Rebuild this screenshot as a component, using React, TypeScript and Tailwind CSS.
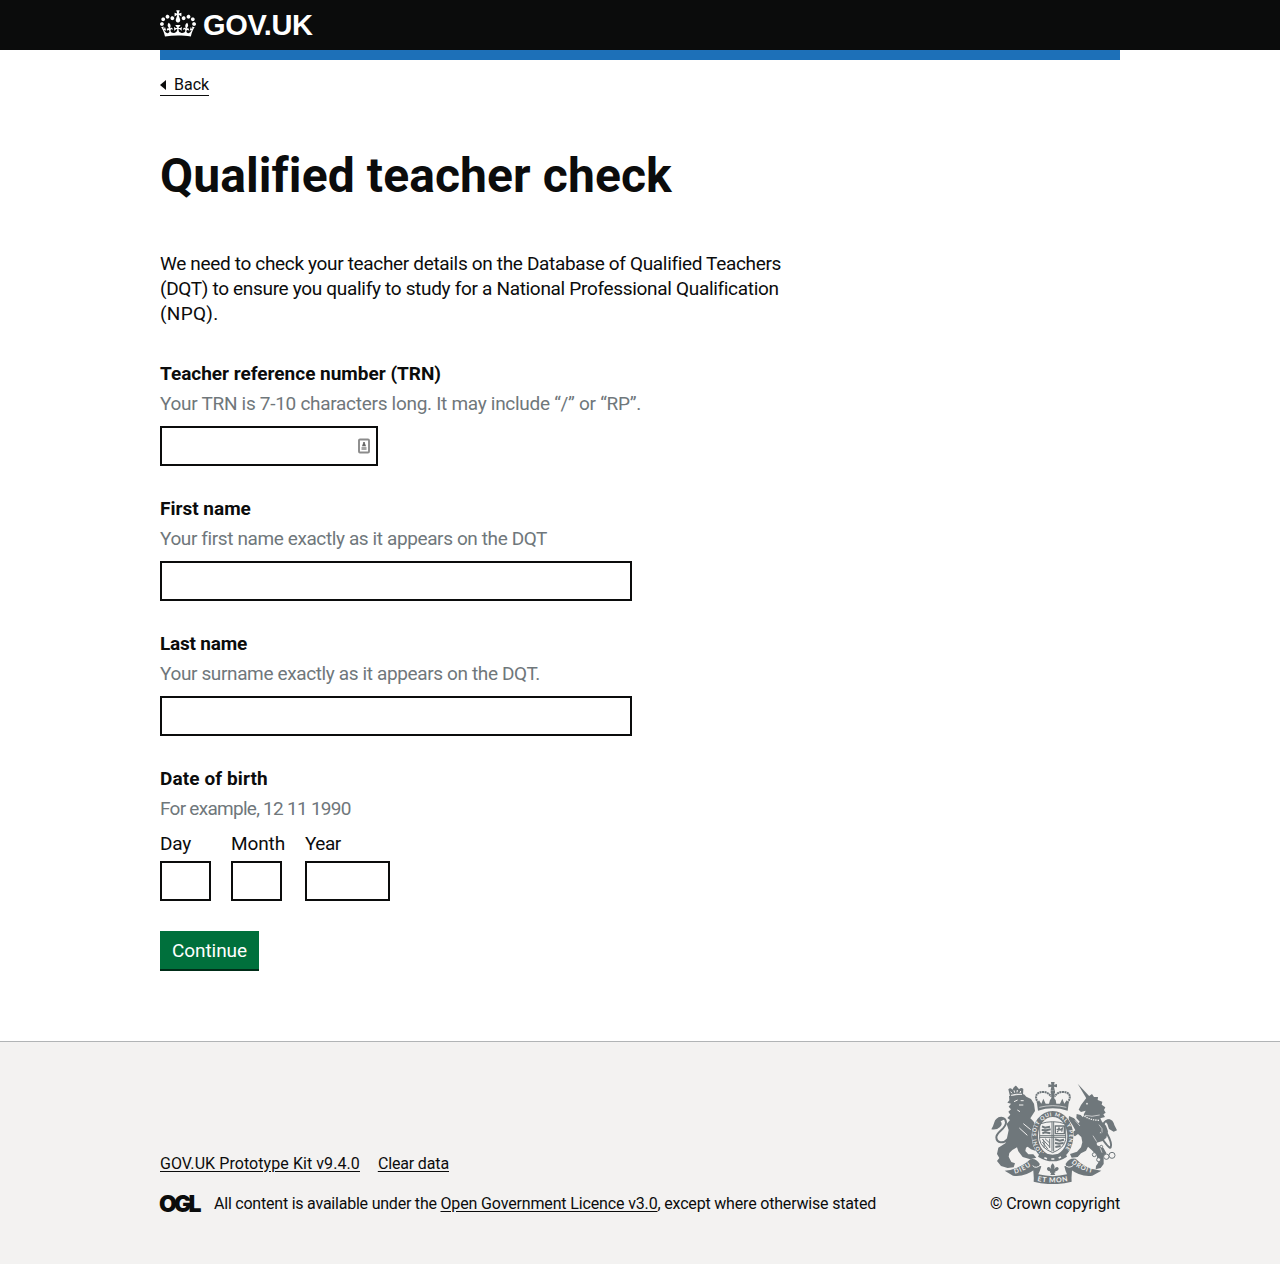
import type { ReactNode } from 'react';

function CrownIcon() {
  return (
    <svg className="h-[27px] w-9 shrink-0" viewBox="0 0 132 97" aria-hidden="true">
      <path
        fill="currentColor"
        fillRule="evenodd"
        d="M25 30.2c3.5 1.5 7.7-.2 9.1-3.7 1.5-3.6-.2-7.8-3.9-9.2-3.6-1.4-7.6.3-9.1 3.9-1.4 3.5.3 7.5 3.9 9zM9 39.5c3.6 1.5 7.8-.2 9.2-3.7 1.5-3.6-.2-7.8-3.9-9.1-3.6-1.5-7.6.2-9.1 3.8-1.4 3.5.3 7.5 3.8 9zM4.4 57.2c3.5 1.5 7.7-.2 9.1-3.8 1.5-3.6-.2-7.7-3.9-9.1-3.5-1.5-7.6.3-9.1 3.8-1.4 3.5.3 7.6 3.9 9.1zm38.3-21.4c3.5 1.5 7.7-.2 9.1-3.8 1.5-3.6-.2-7.7-3.9-9.1-3.6-1.5-7.6.3-9.1 3.8-1.3 3.6.4 7.7 3.9 9.1zm64.4-5.6c-3.6 1.5-7.8-.2-9.1-3.7-1.5-3.6.2-7.8 3.8-9.2 3.6-1.4 7.7.3 9.2 3.9 1.3 3.5-.4 7.5-3.9 9zm15.9 9.3c-3.6 1.5-7.7-.2-9.1-3.7-1.5-3.6.2-7.8 3.7-9.1 3.6-1.5 7.7.2 9.2 3.8 1.5 3.5-.3 7.5-3.8 9zm4.7 17.7c-3.6 1.5-7.8-.2-9.2-3.8-1.5-3.6.2-7.7 3.9-9.1 3.6-1.5 7.7.3 9.2 3.8 1.3 3.5-.4 7.6-3.9 9.1zM89.3 35.8c-3.6 1.5-7.8-.2-9.2-3.8-1.4-3.6.2-7.7 3.9-9.1 3.6-1.5 7.7.3 9.2 3.8 1.4 3.6-.3 7.7-3.9 9.1zM69.7 17.7l8.9 4.7V9.3l-8.9 2.8c-.2-.3-.5-.6-.9-.9L72.4 0H59.6l3.5 11.2c-.3.3-.6.5-.9.9l-8.8-2.8v13.1l8.8-4.7c.3.3.6.7.9.9l-5 15.4v.1c-.2.8-.4 1.6-.4 2.4 0 4.1 3.1 7.5 7 8.1h.2c.3 0 .7.1 1 .1.4 0 .7 0 1-.1h.2c4-.6 7.1-4.1 7.1-8.1 0-.8-.1-1.7-.4-2.4V34l-5.1-15.4c.4-.2.7-.6 1-.9zM66 92.8c16.9 0 32.8 1.1 47.1 3.2 4-16.9 8.9-26.7 14-33.5l-9.6-3.4c1 4.9 1.1 7.2 0 10.2-1.5-1.4-3-4.3-4.2-8.7L108.6 76c2.8-2 5-3.2 7.5-3.3-4.4 9.4-10 11.9-13.6 11.2-4.3-.8-6.3-4.6-5.6-7.9 1-4.7 5.7-5.9 8-.5 4.3-8.7-3-11.4-7.6-8.8 7.1-7.2 7.9-13.5 2.1-21.1-8 6.1-8.1 12.3-4.5 20.8-4.7-5.4-12.1-2.5-9.5 6.2 3.4-5.2 7.9-2 7.2 3.1-.6 4.3-6.4 7.8-13.5 7.2-10.3-.9-10.9-8-11.2-13.8 2.5-.5 7.1 1.8 11 7.3L80.2 60c-4.1 4.4-8 5.3-12.3 5.4 1.4-4.4 8-11.6 8-11.6H55.5s6.4 7.2 7.9 11.6c-4.2-.1-8-1-12.3-5.4l1.4 16.4c3.9-5.5 8.5-7.7 10.9-7.3-.3 5.8-.9 12.8-11.1 13.8-7.2.6-12.9-2.9-13.5-7.2-.7-5 3.8-8.3 7.1-3.1 2.7-8.7-4.6-11.6-9.4-6.2 3.7-8.5 3.6-14.7-4.6-20.8-5.8 7.6-5 13.9 2.2 21.1-4.7-2.6-11.9.1-7.7 8.8 2.3-5.5 7.1-4.2 8.1.5.7 3.3-1.3 7.1-5.7 7.9-3.5.7-9-1.8-13.5-11.2 2.5.1 4.7 1.3 7.5 3.3l-4.7-15.4c-1.2 4.4-2.7 7.2-4.3 8.7-1.1-3-.9-5.3 0-10.2l-9.5 3.4c5 6.9 9.9 16.7 14 33.5 14.8-2.1 30.8-3.2 47.7-3.2z"
      />
    </svg>
  );
}

const INK = '#6f777b';
const PAPER = '#f3f2f1';

function RoyalArms() {
  return (
    <svg className="h-[102px] w-[126px]" viewBox="33 36 378 306" fill="none" aria-hidden="true">
      <defs>
        <path id="motto-garter" d="M192 248A50 59 0 1 1 244 248" />
        <path id="motto-left" d="M104 311Q134 304 162 280" />
        <path id="motto-mid" d="M168 332Q218 343 268 332" />
        <path id="motto-right" d="M274 278Q304 305 350 311" />
      </defs>

      {/* lion */}
      <path
        fill={INK}
        d="M87 78L132 73L139 80L153 87L162 101L165 123L151 145L160 154L170 168L160 180L166 204L176 224L176 246L153 238L143 230L138 233L136 243L145 253L160 253L169 263L151 268L128 261L115 244L111 232L97 240L88 249L86 260L94 276L105 280L101 292L83 294L63 288L51 273L58 264L51 252L55 233L76 220L81 204L86 180L80 162L90 150L82 144L91 134L85 125L93 118L86 110L93 101L82 98L88 91Z"
      />
      <path stroke={PAPER} strokeWidth="3" d="M102 95l11-5M122 92l9 0M117 105l13 0M118 174l24 22M130 161l22 18M112 120l8 5" />
      <path fill={INK} d="M90 79L85 58Q91 51 97 59Q101 50 107 49Q114 50 117 58Q124 50 130 57L129 75Q108 69 90 79Z" />
      <path stroke={PAPER} strokeWidth="3" d="M92 65l4 5M102 61l2 7M112 60l-1 7M122 63l-2 6M93 76q15-5 33-3" />
      <circle cx="107" cy="50" r="3" fill={INK} />
      <path stroke={INK} strokeWidth="6" d="M84 207C70 222 50 220 49 202C48 186 79 176 78 157C77 144 65 140 54 147" />
      <path fill={INK} d="M75 147C62 136 46 143 43 157Q39 171 34 178Q50 181 60 171Q69 163 62 154Z" />

      {/* unicorn */}
      <path fill={INK} d="M293 41L331 82L322 90Z" />
      <path
        fill={INK}
        d="M319 84L336 72L342 81L354 81L353 90L367 95L365 104L376 112L372 120L377 128L370 133L375 141L361 145L366 155L378 167L384 184L379 203L368 213L350 218L351 226L370 233L379 249L371 261L371 282L362 294L347 298L348 288L355 278L350 256L335 240L324 230L318 242L303 250L293 261L275 263L270 252L291 245L303 232L307 217L304 201L294 192L285 199L272 192L267 180L277 187L286 181L277 164L266 149L267 138L282 145L296 160L299 155L289 144L290 132L302 135L309 142L312 132L317 122L303 126L296 119L303 105Z"
      />
      <circle cx="321" cy="101" r="2.5" fill={PAPER} />
      <path stroke={PAPER} strokeWidth="4" strokeDasharray="4 3" d="M302 130Q324 150 357 151" />
      <path stroke={PAPER} strokeWidth="2" d="M315 136q20 6 44-1M357 164l9 12 0 12M285 151l15 17M339 197l11 18M360 232l6 16" />
      <path stroke={INK} strokeWidth="6" d="M369 210C381 226 389 236 392 232C400 217 379 191 372 173C366 155 382 148 392 154" />
      <path fill={INK} d="M375 153C388 142 400 151 403 165L411 181L401 185L387 177L382 162Z" />
      <g stroke={INK} strokeWidth="3" fill={PAPER}>
        <circle cx="343" cy="254" r="6" />
        <circle cx="356" cy="269" r="6" />
        <circle cx="379" cy="260" r="8" />
        <circle cx="396" cy="256" r="9" />
        <circle cx="362" cy="188" r="3" />
        <circle cx="364" cy="230" r="4" />
      </g>

      {/* crown over the shield */}
      <g fill={INK}>
        <path d="M213 36h11l-2 8 9-2v10l-9-2 2 10h-12l2-10-9 2V42l9 2zM212 61h13v8h-13z" />
        <path d="M171 100L177 91L184 101L190 86L197 101L207 101L210 90L218 80L227 90L229 101L240 101L247 86L253 101L260 91L266 100L263 122Q218 108 174 122Z" />
        <path d="M213 68h11l-2 25h-7z" />
      </g>
      <g stroke={INK} strokeWidth="6" strokeDasharray="6 1.5">
        <path d="M175 99C158 74 176 64 193 66Q208 69 213 80" />
        <path d="M262 99C280 74 262 64 244 66Q229 69 224 80" />
      </g>
      <path stroke={PAPER} strokeWidth="2" d="M178 112Q218 102 259 112" />

      {/* garter and quartered shield */}
      <ellipse cx="218" cy="198" rx="63" ry="76" fill={PAPER} />
      <ellipse cx="218" cy="198" rx="53" ry="66" stroke={INK} strokeWidth="18" />
      <text fill={PAPER} fontSize="16" fontWeight="700" fontFamily="Lato, sans-serif" textLength="270">
        <textPath href="#motto-garter">HONI SOIT QUI MAL Y PENSE</textPath>
      </text>
      <g stroke={INK}>
        <path strokeWidth="3" d="M179 162Q218 148 257 162V209Q253 234 218 248Q183 234 179 209Z" />
        <path strokeWidth="3" d="M216 156v88M221 156v88M178 197h80M178 202h80" />
        <path strokeWidth="6" d="M186 169l9 4 15-3M185 180l14 1 13-3M187 190l8-3 16 3M225 208l14 4 13-3M225 219l12 2 14-2M226 231l16-3" />
        <path strokeWidth="3" d="M187 207l22 24M187 216l17 22M195 206l15 14M192 234q3-17-3-26M209 206v28" />
        <path strokeWidth="4" d="M226 168h27v23h-27zM232 187l5-13 3 6 7-5-2 10M230 177l6 4" />
      </g>
      <path fill={INK} d="M181 246Q217 262 255 246L261 260Q219 288 174 260Z" />
      <path stroke={PAPER} strokeWidth="5" d="M193 263l8 3M214 267h9M236 264l7-3" />

      {/* ribbons */}
      <path fill={INK} d="M74 302Q121 297 151 268Q167 263 179 281Q180 292 166 297Q134 322 99 317Z" />
      <path fill={INK} d="M364 302Q315 297 287 266Q268 263 257 281Q256 292 270 297Q302 322 337 317Z" />
      <path fill={INK} d="M155 283L184 289Q180 303 175 313Q218 324 261 313Q256 303 253 289L281 282Q273 306 275 335Q218 350 161 335Q163 306 155 283Z" />
      <path stroke={PAPER} strokeWidth="3" d="M158 287Q168 298 183 284M253 284Q267 298 280 286" />
      <g fill={PAPER} fontWeight="700" fontFamily="Lato, sans-serif">
        <text fontSize="19" textLength="54">
          <textPath href="#motto-left">DIEU</textPath>
        </text>
        <text fontSize="21" textLength="92" x="4">
          <textPath href="#motto-mid">ET MON</textPath>
        </text>
        <text fontSize="19" textLength="70">
          <textPath href="#motto-right">DROIT</textPath>
        </text>
      </g>
      <path
        fill={INK}
        d="M218 280Q227 289 222 298Q231 286 236 295Q236 303 226 304V308H222L226 315H211L214 308H210V304Q200 303 201 295Q206 286 214 298Q209 289 218 280Z"
      />
    </svg>
  );
}

function AutofillIcon() {
  return (
    <svg className="h-4 w-3" viewBox="0 0 12 16" fill="none" aria-hidden="true">
      <rect x="1" y="1.5" width="10" height="13" rx="1" stroke="#8b8b8b" strokeWidth="1.9" />
      <circle cx="6" cy="5" r="1.1" fill="#666" />
      <path d="M5 5.5h2L8 8.2H4z" fill="#666" />
      <path d="M3.5 9.8h5M3.5 11.2h5" stroke="#a5a5a5" strokeWidth="1.4" />
    </svg>
  );
}

const inputBox = 'h-10 border-2 border-[#0b0c0c] bg-white px-1 outline-none';

function Field({ id, label, labelClass, hint, hintClass, children }: {
  id: string;
  label: string;
  labelClass: string;
  hint: string;
  hintClass: string;
  children: ReactNode;
}) {
  return (
    <div className="mb-[30px] flex flex-col items-start">
      <label htmlFor={id} className={`mb-[5px] font-bold whitespace-nowrap ${labelClass}`}>{label}</label>
      <p className={`mb-2.5 whitespace-nowrap text-[#6f777b] ${hintClass}`}>{hint}</p>
      {children}
    </div>
  );
}

function DatePart({ id, label, labelClass, width }: { id: string; label: string; labelClass: string; width: string }) {
  return (
    <div className="flex flex-col items-start">
      <label htmlFor={id} className={`mb-[5px] ${labelClass}`}>{label}</label>
      <input id={id} className={`${inputBox} ${width}`} />
    </div>
  );
}

export default function App() {
  return (
    <div className="flex min-h-[1264px] flex-col bg-white font-['Roboto',sans-serif] text-[19px] leading-[25px] text-[#0b0c0c]">
      <header className="h-[50px] bg-[#0b0c0c] text-white">
        <div className="mx-auto flex h-full w-[960px] items-start pt-2.5">
          <CrownIcon />
          <span className="mt-px ml-[7px] font-['Liberation_Sans',sans-serif] text-[29px] leading-[28px] font-bold tracking-[-0.35px]">GOV.UK</span>
        </div>
      </header>

      <div className="mx-auto w-[960px] grow">
        <div className="h-2.5 bg-[#1d70b8]" />
        <a href="#" className="mt-[15px] inline-flex h-[21px] items-center border-b border-[#0b0c0c] text-base leading-5">
          <svg className="mr-2 h-2.5 w-1.5" viewBox="0 0 6 10" aria-hidden="true">
            <path d="M6 0v10L0 5z" fill="currentColor" />
          </svg>
          Back
        </a>

        <main className="flex flex-col items-start pt-[55px]">
          <h1 className="mb-[50px] text-[48px] leading-[50px] font-bold tracking-[0.1px]">Qualified teacher check</h1>

          <p className="mb-[35px] whitespace-nowrap">
            <span className="block tracking-[-0.335px]">We need to check your teacher details on the Database of Qualified Teachers</span>
            <span className="block tracking-[-0.315px]">(DQT) to ensure you qualify to study for a National Professional Qualification</span>
            <span className="block tracking-[0.3px]">(NPQ).</span>
          </p>

          <Field id="trn" label="Teacher reference number (TRN)" labelClass="tracking-[-0.01px]" hint="Your TRN is 7-10 characters long. It may include “/” or “RP”." hintClass="tracking-[-0.29px]">
            <div className="relative">
              <input id="trn" className={`${inputBox} block w-[218px]`} />
              <span className="absolute top-3 right-2">
                <AutofillIcon />
              </span>
            </div>
          </Field>

          <Field id="first" label="First name" labelClass="" hint="Your first name exactly as it appears on the DQT" hintClass="tracking-[-0.39px]">
            <input id="first" className={`${inputBox} w-[472px]`} />
          </Field>

          <Field id="last" label="Last name" labelClass="tracking-[-0.2px]" hint="Your surname exactly as it appears on the DQT." hintClass="tracking-[-0.37px]">
            <input id="last" className={`${inputBox} w-[472px]`} />
          </Field>

          <Field id="day" label="Date of birth" labelClass="tracking-[0.1px]" hint="For example, 12 11 1990" hintClass="tracking-[-0.73px]">
            <div className="flex">
              <div className="w-[71px]"><DatePart id="day" label="Day" labelClass="tracking-[-0.2px]" width="w-[51px]" /></div>
              <div className="w-[74px]"><DatePart id="month" label="Month" labelClass="tracking-[-0.12px]" width="w-[51px]" /></div>
              <DatePart id="year" label="Year" labelClass="tracking-[-0.5px]" width="w-[85px]" />
            </div>
          </Field>

          <button type="button" className="h-[38px] w-[99px] bg-[#00703c] text-white shadow-[0_2px_0_#002d18] tracking-[-0.07px]">Continue</button>
        </main>
      </div>

      <footer className="h-[223px] border-t border-[#b1b4b6] bg-[#f3f2f1] text-base leading-5">
        <div className="mx-auto flex w-[960px] items-end justify-between pt-10">
          <div className="whitespace-nowrap">
            <div className="mb-5 flex gap-[18px] underline underline-offset-2">
              <a href="#" className="tracking-[0.07px]">GOV.UK Prototype Kit v9.4.0</a>
              <a href="#" className="tracking-[-0.15px]">Clear data</a>
            </div>
            <div className="flex items-center">
              <span className="mr-[13px] -ml-px w-[42px] font-['Inter',sans-serif] text-[23px] leading-[18px] font-black tracking-[-2.8px]">OGL</span>
              <span>
                <span className="tracking-[-0.22px]">All content is available under the </span>
                <a href="#" className="tracking-[-0.147px] underline underline-offset-2">Open Government Licence v3.0</a>
                <span className="tracking-[-0.185px]">, except where otherwise stated</span>
              </span>
            </div>
          </div>
          <div className="flex flex-col items-end">
            <div className="mr-[3px] mb-2.5">
              <RoyalArms />
            </div>
            <a href="#" className="tracking-[-0.146px]">© Crown copyright</a>
          </div>
        </div>
      </footer>
    </div>
  );
}
